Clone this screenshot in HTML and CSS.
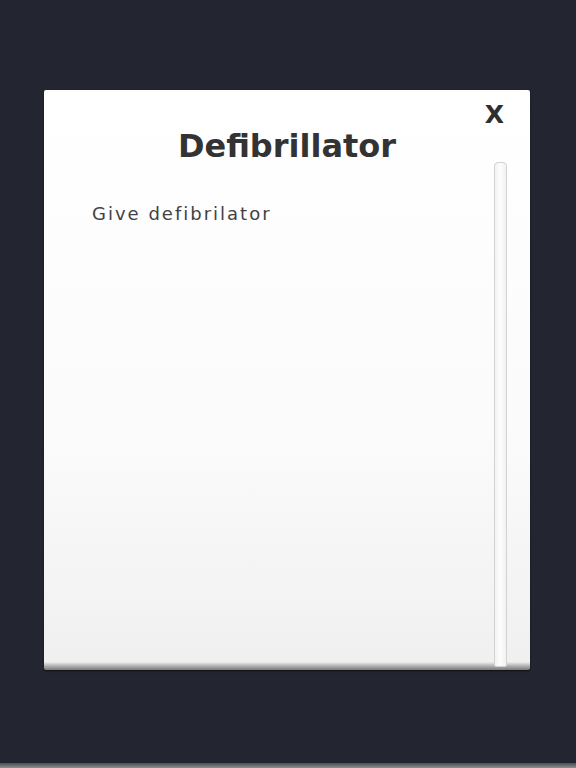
FILE: index.html
```html
<!DOCTYPE html>
<html lang="en">
<head>
    <meta charset="UTF-8">
    <meta name="viewport" content="width=device-width, initial-scale=1.0">
    <title>Defibrillator</title>
    <link rel="stylesheet" href="styles.css">
</head>
<body>
    <div class="screen">
        <div class="dialog">
            <h2 class="dialog-title">Defibrillator</h2>
            <span class="dialog-close">X</span>
            <div class="dialog-body">
                <div class="dialog-content">
                    <p>Give defibrilator</p>
                </div>
                <div class="scroll-track"></div>
            </div>
        </div>
    </div>
    <div class="bottom-bar"></div>
</body>
</html>
```

FILE: styles.css
```css
body {
    margin: 0;
    height: 768px;
    display: flex;
    flex-direction: column;
    background-color: #232630;
    font-family: "DejaVu Sans", sans-serif;
}
.screen {
    flex: 1;
    padding: 90px 0 0 44px;
}
.dialog {
    position: relative;
    width: 486px;
    height: 580px;
    box-sizing: border-box;
    padding-top: 40px;
    display: flex;
    flex-direction: column;
    background: linear-gradient(#ffffff 0%, #fbfbfb 60%, #f0f0f0 98.6%, #a8a8a8 99.4%, #7a7a7a 100%);
    border-radius: 2px;
    box-shadow: 0 1px 2px rgba(0, 0, 0, 0.6);
}
.dialog-title {
    margin: 0;
    text-align: center;
    font-size: 32px;
    line-height: 32px;
    font-weight: bold;
    color: #333;
}
.dialog-close {
    position: absolute;
    top: 12px;
    right: 26px;
    font-size: 25px;
    line-height: 25px;
    font-weight: bold;
    color: #2e2e2e;
}
.dialog-body {
    flex: 1;
    display: flex;
    padding-bottom: 3px;
}
.dialog-content {
    flex: 1;
    padding: 40px 0 0 48px;
}
.dialog-content p {
    margin: 0;
    font-size: 18px;
    line-height: 24px;
    letter-spacing: 2px;
    color: #424242;
}
.scroll-track {
    width: 13px;
    margin-right: 23px;
    box-sizing: border-box;
    border: 1px solid #d2d2d2;
    border-radius: 4px 4px 2px 2px;
    background: linear-gradient(90deg, #f3f3f3, #fdfdfd 50%, #f1f1f1);
}
.bottom-bar {
    height: 5px;
    background: linear-gradient(#4a4c52, #8e8e8e);
}
```
